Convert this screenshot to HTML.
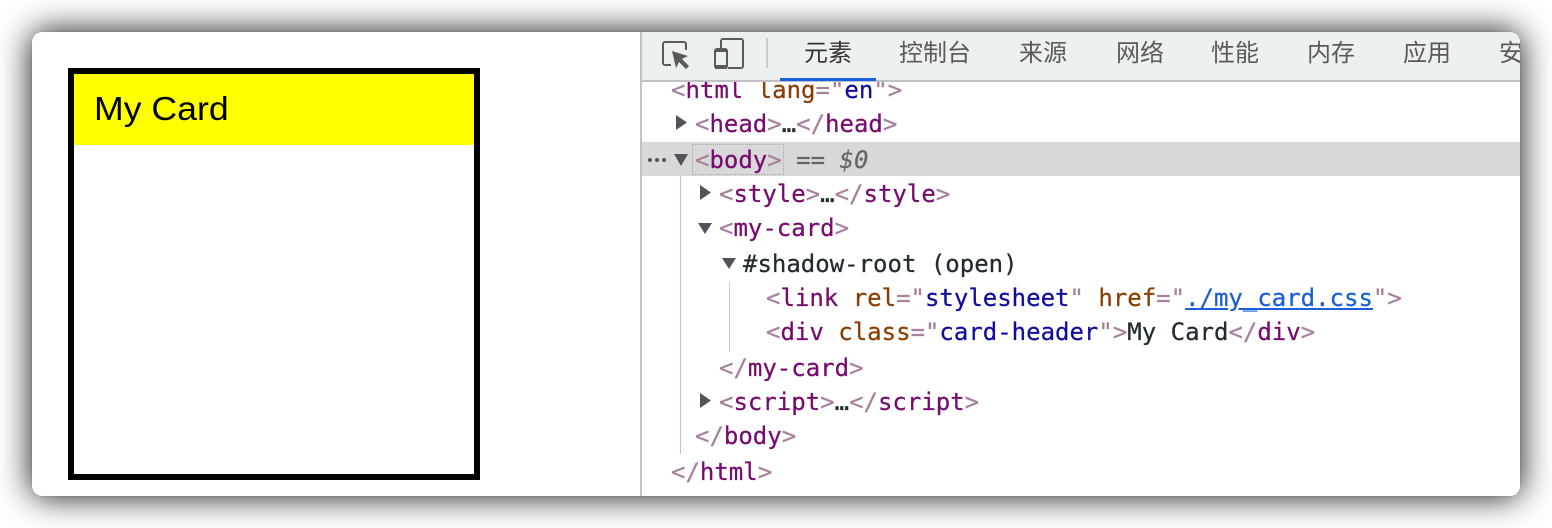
<!DOCTYPE html>
<html lang="zh">
<head>
<meta charset="utf-8">
<title>My Card</title>
<style>
html,body{margin:0;padding:0;width:1552px;height:528px;background:#fff;overflow:hidden}
#win{position:absolute;left:32px;top:32px;width:1488px;height:464px;border-radius:10px;background:#fff;box-shadow:0 0 1px 0 rgba(80,80,90,.6),0 0 34px 0 rgba(0,0,0,.95)}
#clip{position:absolute;left:0;top:0;width:1488px;height:464px;border-radius:10px;overflow:hidden}
#card{position:absolute;left:36px;top:36px;width:400px;height:400px;border:6px solid #000;background:#fff}
#hdr{position:absolute;left:0;top:0;width:400px;height:71px;background:#ff0}
#hdr span{position:absolute;left:20px;top:15px;font:33px/40px "Liberation Sans",sans-serif;color:#000;white-space:pre;transform:scaleX(1.08);transform-origin:0 0}
#dt{position:absolute;left:608px;top:0;width:880px;height:464px;background:#fff;border-left:2px solid #c0c4c8;box-sizing:border-box}
#bar{position:absolute;left:0;top:0;width:878px;height:48px;background:#ecf0f1}
#barline{position:absolute;left:0;top:48px;width:878px;height:2px;background:#bfc1c7}
#ul{position:absolute;left:138px;top:46px;width:96px;height:3px;background:#1a5fe0}
.t{position:absolute;top:6px;font:24px/32px "Liberation Sans","Noto Sans CJK SC",sans-serif;color:#5a5a5a;white-space:pre}
#sep{position:absolute;left:124px;top:6px;width:2px;height:30px;background:#c9cccf}
.r{position:absolute;font:24px/34px "DejaVu Sans Mono",monospace;white-space:pre;color:#222b30;height:34px;-webkit-text-stroke:.25px}
.b{color:#a5809f}.n{color:#770b6e}.a{color:#8a3e02}.v{color:#0f0f9c}.l{color:#1a5fd8;text-decoration:underline}
#sel{position:absolute;left:0;top:110px;width:878px;height:34px;background:#d8d8d8}
#dots{position:absolute;left:50px;top:112px;width:92px;height:31px;border:1px dotted #aaa;box-sizing:border-box}
#bl{position:absolute;left:38px;top:144px;width:1px;height:278px;background:#a8c7f0}
#gl{position:absolute;left:87px;top:250px;width:1px;height:70px;background:#ccc}
svg{position:absolute;overflow:visible}
</style>
</head>
<body>
<div id="win"><div id="clip">
<div id="card"><div id="hdr"><span>My Card</span></div></div>
<div id="dt">
<div id="bar"></div><div id="barline"></div><div id="ul"></div>
<svg style="left:20px;top:9px" width="28" height="28" viewBox="0 0 28 28"><path d="M9 24H3a2 2 0 0 1-2-2V3a2 2 0 0 1 2-2h19a2 2 0 0 1 2 2v6" fill="none" stroke="#5a5a5a" stroke-width="2"/><path d="M10 10l16 5-6 3 7 7-3 3-7-7-3 6z" fill="#5a5a5a"/></svg>
<svg style="left:72px;top:6px" width="32" height="34" viewBox="0 0 32 34"><path d="M7 10V3a2 2 0 0 1 2-2h18a2 2 0 0 1 2 2v25a2 2 0 0 1-2 2H14" fill="none" stroke="#5a5a5a" stroke-width="2"/><rect x="1" y="11" width="12" height="19" rx="2" fill="none" stroke="#5a5a5a" stroke-width="2"/><rect x="1" y="11" width="12" height="3" fill="#5a5a5a"/><rect x="1" y="27" width="12" height="4" fill="#5a5a5a"/></svg>
<div id="sep"></div>
<span class="t" style="left:162px;color:#333">元素</span>
<span class="t" style="left:257px">控制台</span>
<span class="t" style="left:377px">来源</span>
<span class="t" style="left:474px">网络</span>
<span class="t" style="left:569px">性能</span>
<span class="t" style="left:665px">内存</span>
<span class="t" style="left:761px">应用</span>
<span class="t" style="left:857px">安全</span>
<div id="sel"></div><div id="dots"></div><div id="bl"></div><div id="gl"></div>
<div class="r" style="left:29px;top:41px;clip-path:inset(9px -10px 0 -10px)"><span class="b">&lt;</span><span class="n">html</span> <span class="a">lang</span><span class="b">="</span><span class="v">en</span><span class="b">"&gt;</span></div>
<div class="r" style="left:53px;top:75px"><span class="b">&lt;</span><span class="n">head</span><span class="b">&gt;</span>…<span class="b">&lt;/</span><span class="n">head</span><span class="b">&gt;</span></div>
<div class="r" style="left:53px;top:111px"><span class="b">&lt;</span><span class="n">body</span><span class="b">&gt;</span><span style="color:#666"> == <i>$0</i></span></div>
<div class="r" style="left:77px;top:145px"><span class="b">&lt;</span><span class="n">style</span><span class="b">&gt;</span>…<span class="b">&lt;/</span><span class="n">style</span><span class="b">&gt;</span></div>
<div class="r" style="left:77px;top:179px"><span class="b">&lt;</span><span class="n">my-card</span><span class="b">&gt;</span></div>
<div class="r" style="left:101px;top:215px">#shadow-root (open)</div>
<div class="r" style="left:124px;top:249px"><span class="b">&lt;</span><span class="n">link</span> <span class="a">rel</span><span class="b">="</span><span class="v">stylesheet</span><span class="b">"</span> <span class="a">href</span><span class="b">="</span><span class="l">./my_card.css</span><span class="b">"&gt;</span></div>
<div class="r" style="left:124px;top:283px"><span class="b">&lt;</span><span class="n">div</span> <span class="a">class</span><span class="b">="</span><span class="v">card-header</span><span class="b">"&gt;</span>My Card<span class="b">&lt;/</span><span class="n">div</span><span class="b">&gt;</span></div>
<div class="r" style="left:77px;top:319px"><span class="b">&lt;/</span><span class="n">my-card</span><span class="b">&gt;</span></div>
<div class="r" style="left:77px;top:353px"><span class="b">&lt;</span><span class="n">script</span><span class="b">&gt;</span>…<span class="b">&lt;/</span><span class="n">script</span><span class="b">&gt;</span></div>
<div class="r" style="left:53px;top:387px"><span class="b">&lt;/</span><span class="n">body</span><span class="b">&gt;</span></div>
<div class="r" style="left:29px;top:423px"><span class="b">&lt;/</span><span class="n">html</span><span class="b">&gt;</span></div>
<svg style="left:34px;top:83px" width="12" height="16"><path d="M0 0L11 7.500L0 15z" fill="#50545a"/></svg>
<svg style="left:32px;top:122px" width="15" height="12"><path d="M0 0H14L7 12z" fill="#50545a"/></svg>
<svg style="left:58px;top:153px" width="12" height="16"><path d="M0 0L11 7.500L0 15z" fill="#50545a"/></svg>
<svg style="left:56px;top:191px" width="15" height="12"><path d="M0 0H14L7 11z" fill="#50545a"/></svg>
<svg style="left:80px;top:226px" width="15" height="12"><path d="M0 0H14L7 11z" fill="#50545a"/></svg>
<svg style="left:58px;top:361px" width="12" height="16"><path d="M0 0L11 7.500L0 15z" fill="#50545a"/></svg>
<svg style="left:5px;top:125px" width="22" height="6"><circle cx="3" cy="3" r="2" fill="#555"/><circle cx="10" cy="3" r="2" fill="#555"/><circle cx="17" cy="3" r="2" fill="#555"/></svg>
</div>
</div></div>
</body>
</html>
